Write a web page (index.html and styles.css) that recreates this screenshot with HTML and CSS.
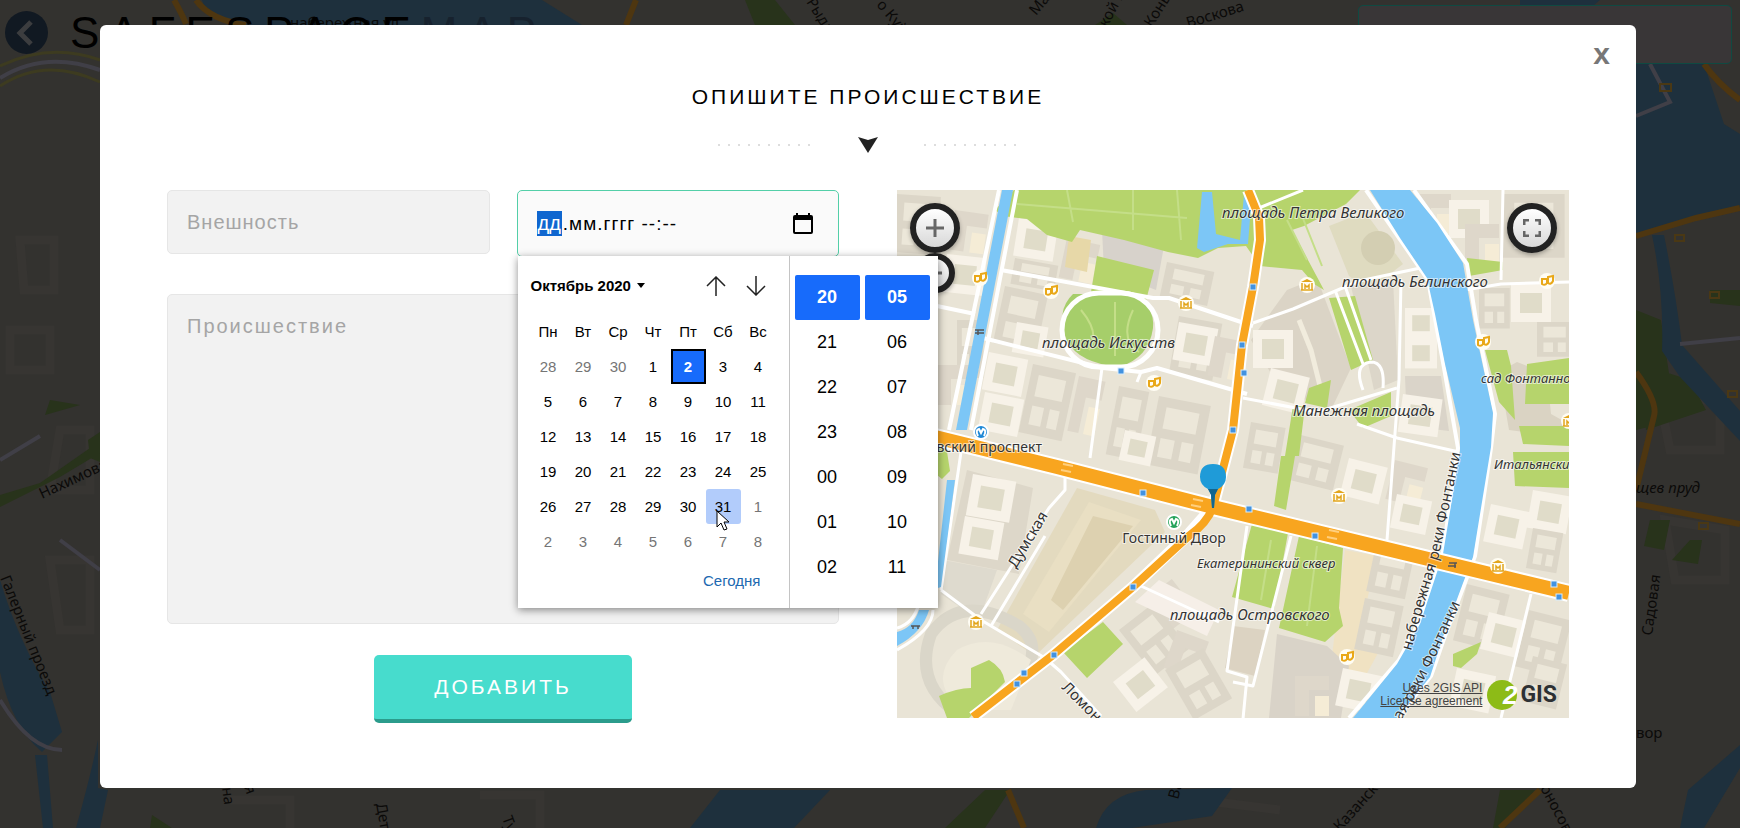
FILE: index.html
```html
<!DOCTYPE html>
<html lang="ru">
<head>
<meta charset="utf-8">
<title>SafeSpaceMap</title>
<link rel="stylesheet" href="styles.css">
</head>
<body>
<div class="stage">
  <svg class="city" viewBox="0 0 1740 828" preserveAspectRatio="none" aria-hidden="true">
    <rect width="1740" height="828" fill="#33322f"/>
    <g fill="none" stroke="#373532" stroke-width="9">
      <path d="M20 240h34v50h-30zM10 330h40v40h-40zM60 430h30v60h-40zM50 560h40v70h-30zM230 800h60v40M480 795h60v60M1200 800l80 10M1660 400h60v50h-50zM1665 520l60 10v50h-50z"/>
    </g>
    <g fill="#28331b">
      <path d="M0 495l40-12 60-42v12l-40 24-60 30zM88 440l12-8v30l-10-4zM50 400l30 5-35 10zM745 0l30 0 20 25h-40zM1095 25l18-12 14 12zM1636 310l25 10 15 100-40 10zM1640 364l50 16 16 30-60 20zM152 815l20 13h-22zM1010 790l-25 38-40 0 40-38zM1650 520l20 0-6 30-20-4zM1690 540l12 0-4 24-26-4zM1710 290l30 0v16l-30-3z"/>
      <path d="M1638 100l25-12 8 20-34 12z"/>
      <path d="M1500 790h35l-30 38h-12z"/>
    </g>
    <g fill="#1e303d">
      <path d="M202 0h340l40 25H232q-25-8-30-25z"/>
      <path d="M1520 0h80l-30 25h-50zM1636 64h68l20 60 16 10v75q-60 10-104 26z"/>
      <path d="M1652 235l12 0q12 60 18 110l58 66v30l-60-64-18-26q2-60-10-116z"/>
      <path d="M0 580q18 60 50 112l12 40-20 20q-30-25-42-80zM35 755h12l6 73h-10zM98 740v48l10 2-8 38h-24q14-50 22-88z"/>
      <path d="M720 790h110l-36 38h-104zM1096 828q10-34 50-38l86-2-20 28-80 12zM1740 745l-52 45-8 38h24l36-60z"/>
    </g>
    <g fill="none" stroke="#4e3610" stroke-width="6">
      <path d="M174 0q8 14 12 24M196 0q14 20 50 25M636 0l-10 25M1704 64q14 20 36 36M1636 236l60-18 44-10M1636 372q22 30 18 44l-18 74M1636 504l104 20M1008 790l16 38M1540 790l-40 38"/>
    </g>
    <g fill="none" stroke="#403f47" stroke-width="4">
      <path d="M0 78q45-28 100-8M1650 64l20 38-34 14M1680 344l60-6M0 460l40-24M60 540l40 30M0 700q30 50 62 50"/>
    </g>
    <path d="M0 66q50-24 100-6M0 86q45-30 100-4" fill="none" stroke="#3d3b20" stroke-width="3"/>
    <g class="city-label">
      <text transform="translate(42 499) rotate(-25)">Нахимова</text>
      <text transform="translate(0 578) rotate(68)">Галерный проезд</text>
      <text transform="translate(806 2) rotate(58)">Рыданского</text>
      <text transform="translate(876 5) rotate(50)">о Куйбышева</text>
      <text transform="translate(1036 16) rotate(-50)">Малая</text>
      <text transform="translate(1107 28) rotate(-62)">кой просп</text>
      <text transform="translate(1152 28) rotate(-58)">Коньшин</text>
      <text transform="translate(1188 28) rotate(-17)">Воскова</text>
      <text transform="translate(290 28)">набережная ул.</text>
      <text x="1636" y="493" font-style="italic">щев пруд</text>
      <text x="1636" y="738">вор</text>
      <text transform="translate(1652 636) rotate(-82)">Садовая</text>
      <text transform="translate(222 788) rotate(82)">на</text>
      <text transform="translate(244 787) rotate(70)">я</text>
      <text transform="translate(376 804) rotate(80)">Детская</text>
      <text transform="translate(502 818) rotate(70)">Тул</text>
      <text transform="translate(1178 800) rotate(-75)">Вал</text>
      <text transform="translate(1340 832) rotate(-48)">Казанская</text>
      <text transform="translate(1540 788) rotate(62)">оносова</text>
    </g>
    <g fill="none" stroke="#4a3814" stroke-width="2">
      <rect x="1660" y="84" width="11" height="7"/><rect x="1675" y="235" width="9" height="6"/><rect x="1710" y="292" width="9" height="6"/><rect x="1728" y="391" width="9" height="6"/><rect x="1699" y="523" width="9" height="6"/>
    </g>
  </svg>

  <header class="topbar">
    <button class="back" type="button" aria-label="Назад">
      <svg width="43" height="43" viewBox="0 0 43 43"><circle cx="21.500" cy="21.500" r="21.500" fill="#111922"/><path d="M26 11L15 22l11 11" fill="none" stroke="#3c3d3f" stroke-width="5"/></svg>
    </button>
    <div class="brand">SAFESPACE<span>MAP</span></div>
    <input class="search" type="text" aria-label="Поиск">
  </header>

  <main class="modal" role="dialog" aria-labelledby="title">
    <button class="close" type="button" aria-label="Закрыть">x</button>
    <h1 id="title">ОПИШИТЕ ПРОИСШЕСТВИЕ</h1>
    <div class="divider">
      <i></i>
      <svg width="20" height="16" viewBox="0 0 20 16"><path d="M0 0l10 3 10-3-10 16z" fill="#222"/></svg>
      <i></i>
    </div>

    <div class="columns">
      <form class="report">
        <div class="pair">
          <input class="field" type="text" placeholder="Внешность" aria-label="Внешность">
          <div class="date">
            <div class="date-box">
              <span class="picked">дд</span>
              <input class="date-input" type="text" value=".мм.гггг --:--" aria-label="Дата и время">
              <button class="icon-button" type="button" aria-label="Открыть календарь">
                <svg width="20" height="21" viewBox="0 0 20 21"><path d="M3 0h2v2h10V0h2v2h1q2 0 2 2v15q0 2-2 2H2q-2 0-2-2V4q0-2 2-2h1zM2 7v12h16V7z" fill="#000" fill-rule="evenodd"/></svg>
              </button>
            </div>
            <div class="picker">
              <section class="calendar">
                <div class="month-row">
                  <button class="month" type="button">Октябрь 2020 <svg width="8" height="5" viewBox="0 0 8 5"><path d="M0 0h8L4 5z"/></svg></button>
                  <button class="step" type="button" aria-label="Предыдущий месяц"><svg width="20" height="20" viewBox="0 0 20 20"><path d="M10 20V1M1 10l9-9 9 9"/></svg></button>
                  <button class="step" type="button" aria-label="Следующий месяц"><svg width="20" height="20" viewBox="0 0 20 20"><path d="M10 0v19M1 10l9 9 9-9"/></svg></button>
                </div>
                <table class="days">
                  <thead><tr><th>Пн</th><th>Вт</th><th>Ср</th><th>Чт</th><th>Пт</th><th>Сб</th><th>Вс</th></tr></thead>
                  <tbody>
                    <tr><td class="out">28</td><td class="out">29</td><td class="out">30</td><td>1</td><td class="today">2</td><td>3</td><td>4</td></tr>
                    <tr><td>5</td><td>6</td><td>7</td><td>8</td><td>9</td><td>10</td><td>11</td></tr>
                    <tr><td>12</td><td>13</td><td>14</td><td>15</td><td>16</td><td>17</td><td>18</td></tr>
                    <tr><td>19</td><td>20</td><td>21</td><td>22</td><td>23</td><td>24</td><td>25</td></tr>
                    <tr><td>26</td><td>27</td><td>28</td><td>29</td><td>30</td><td class="hover">31<svg class="cursor" width="14" height="21" viewBox="0 0 14 21"><path d="M1 1v16l4-4 3 7 3-1-3-7h5z" fill="#fff" stroke="#000"/></svg></td><td class="out">1</td></tr>
                    <tr><td class="out">2</td><td class="out">3</td><td class="out">4</td><td class="out">5</td><td class="out">6</td><td class="out">7</td><td class="out">8</td></tr>
                  </tbody>
                </table>
                <button class="now" type="button">Сегодня</button>
              </section>
              <section class="clock">
                <ul><li class="on">20</li><li>21</li><li>22</li><li>23</li><li>00</li><li>01</li><li>02</li></ul>
                <ul><li class="on">05</li><li>06</li><li>07</li><li>08</li><li>09</li><li>10</li><li>11</li></ul>
              </section>
            </div>
          </div>
        </div>
        <textarea class="field story" placeholder="Происшествие" aria-label="Происшествие"></textarea>
        <button class="submit" type="button">ДОБАВИТЬ</button>
      </form>

      <div class="map">
        <svg class="map-canvas" viewBox="0 0 672 528">
          <defs>
            <path id="q1" d="M514 461C524 425 536 385 542 366L566 252"/>
            <path id="q2" d="M504 531C528 490 543 460 567 405"/>
            <g id="theatre"><circle r="8" fill="#fffdf4"/><path d="M-5-2h5v4q-2 3-5 1zM1-4l5-1v5q-2 4-5 2z" fill="none" stroke="#e9a818" stroke-width="2"/></g>
            <g id="museum"><circle r="8" fill="#fffdf4"/><path d="M-6-3l6-3 6 3z" fill="#e2a51c"/><path d="M-5-2v7h10v-7M-6 5h12M-2 4v-4l2 2 2-2v4" fill="none" stroke="#e2a51c" stroke-width="1.500"/></g>
            <rect id="stop" x="-3" y="-3" width="6" height="6" fill="#4292e0" stroke="#d8ecfb"/>
            <g id="block"><path d="M0 0h44v58H0z" fill="#dcd6c8"/><path d="M8 8h28v18H8zM8 34h12v16H8zM26 34h10v16H26z" fill="#ece7d9"/></g>
            <g id="yard"><path d="M0 0h40v38H0z" fill="#f7f2e8"/><path d="M9 9h22v20H9z" fill="#e0dcc9"/></g>
            <g id="house"><path d="M0 0h34v14H14v26H0z" fill="#ded7ca"/><path d="M20 20h14v20H20z" fill="#f5ecd6"/></g>
          </defs>
          <rect width="672" height="528" fill="#e9e4d6"/>
          <g>
            <use href="#block" transform="translate(0 4) rotate(4)"/><use href="#house" transform="translate(58 20) rotate(8)"/><use href="#yard" transform="translate(50 64) rotate(6)"/>
            <use href="#yard" transform="translate(122 28) rotate(9)"/><use href="#block" transform="translate(118 68) rotate(10) scale(1 .45)"/><use href="#house" transform="translate(170 48) rotate(12)"/>
            <path d="M205 40l62 16-8 44-52-20z" fill="#d7d2cb"/><path d="M172 46l22 4-4 32-22-5z" fill="#e7d8a8"/>
            <use href="#block" transform="translate(108 96) rotate(12)"/><use href="#yard" transform="translate(120 132) rotate(10) scale(.8)"/>
            <use href="#block" transform="translate(270 72) rotate(12) scale(1.100 .6)"/>
            <use href="#block" transform="translate(282 126) rotate(10)"/><use href="#yard" transform="translate(282 132) rotate(10)"/><use href="#house" transform="translate(318 146) rotate(11)"/>
            <use href="#yard" transform="translate(92 162) rotate(11)"/><use href="#yard" transform="translate(88 202) rotate(11)"/><use href="#block" transform="translate(136 174) rotate(12) scale(1 1.200)"/><use href="#house" transform="translate(182 186) rotate(12) scale(.8 1.400)"/><use href="#block" transform="translate(222 196) rotate(11) scale(.7 1.200)"/><use href="#block" transform="translate(262 206) rotate(11) scale(1.200)"/><use href="#yard" transform="translate(228 240) rotate(12) scale(.8)"/>
            <use href="#block" transform="translate(60 130) scale(.6 1)"/><use href="#house" transform="translate(40 175)"/>
            <path d="M432 36l36-14 38 52-34 26-20-14z" fill="#dfdbc0"/><circle cx="481" cy="58" r="17" fill="#d3ceb2"/>
            <path d="M390 100l30-12 34 90-20 42-50-20-30-50z" fill="#dbd4c6"/><path d="M454 96l42-6 5 100-24 10z" fill="#dcd6c9"/><path d="M402 130l12 30 10 40" fill="none" stroke="#f1ecdd" stroke-width="5"/>
            <use href="#yard" transform="translate(356 140)"/><use href="#yard" transform="translate(374 178) rotate(14)"/><use href="#block" transform="translate(354 232) rotate(10) scale(.8)"/>
            <use href="#yard" transform="translate(508 118) scale(.8)"/><use href="#yard" transform="translate(508 148) scale(.8)"/><path d="M508 186h36l8 55-42-5z" fill="#dad4c9"/><use href="#yard" transform="translate(506 204) rotate(8)"/>
            <use href="#house" transform="translate(520 4)"/><use href="#yard" transform="translate(552 10)"/><use href="#house" transform="translate(568 34)"/><use href="#block" transform="translate(606 4) scale(1.400 1.100)"/>
            <use href="#block" transform="translate(582 98) scale(.7)"/><use href="#yard" transform="translate(614 94)"/><use href="#block" transform="translate(640 132) scale(.8 .6)"/><path d="M602 182l18-10 30 12 4 40 18 10v14l-60-8z" fill="#dad3c3"/>
            <use href="#block" transform="translate(400 244) rotate(14) scale(1.100 .8)"/><use href="#yard" transform="translate(452 268) rotate(14)"/><use href="#house" transform="translate(498 270) rotate(14)"/><use href="#yard" transform="translate(500 304) rotate(12) scale(.9)"/>
            <use href="#yard" transform="translate(594 314) rotate(12)"/><use href="#yard" transform="translate(636 300) rotate(10)"/><use href="#block" transform="translate(636 338) rotate(10) scale(.7)"/>
            <path d="M70 280l66 18-14 86-72-14z" fill="#ddd7c9"/><use href="#yard" transform="translate(76 284) rotate(10) scale(1.100)"/><use href="#yard" transform="translate(68 326) rotate(10)"/>
            <path d="M180 298l78 22 10 22-130 124-38-26z" fill="#e3dabf"/><path d="M192 312l52 18-92 112-26-18z" fill="#e9dfc3"/><path d="M196 326l40 10-70 84-12-10z" fill="#ddd1b0"/>
            <path d="M46 370l54 10-18 50-38-26z" fill="#dedace"/>
            <path d="M62 524q-46-30-28-80 30-42 88-8 20 16 10 40" fill="none" stroke="#dad6c9" stroke-width="12"/>
            <path d="M60 460q-30 30 4 60h50l20-50q-40-30-74-10z" fill="#efeadb"/>
            <use href="#house" transform="translate(248 410) rotate(-38)"/><use href="#block" transform="translate(222 440) rotate(-38)"/><use href="#house" transform="translate(280 440) rotate(20)"/><use href="#yard" transform="translate(216 492) rotate(-38)"/><use href="#block" transform="translate(268 480) rotate(-30)"/><path d="M262 390l60 30-12 26-72-34z" fill="#f6efe8"/>
            <path d="M448 360l32 6-18 80 24 8-22 40-30-20z" fill="#f0e2c2"/><use href="#block" transform="translate(480 350) rotate(12) scale(.9)"/><use href="#block" transform="translate(468 408) rotate(12) scale(.9)"/>
            <path d="M336 436l32 4-10 46-30-8z" fill="#dcd3c2"/><path d="M380 444l50 12 22 20-8 52h-72z" fill="#d9d3c8"/><use href="#yard" transform="translate(446 478) rotate(12)"/><use href="#house" transform="translate(398 486)"/>
            <use href="#block" transform="translate(570 394) rotate(14)"/><use href="#yard" transform="translate(592 422) rotate(14)"/><use href="#block" transform="translate(632 420) rotate(14)"/><use href="#yard" transform="translate(560 478) rotate(12)"/><use href="#block" transform="translate(636 466) rotate(14) scale(.8)"/>
          </g>
          <g fill="#b6d46c">
            <path d="M117 0h256l90 0-14 14-42 22-12 4 32 60-10-6-12-14-42-4-14-20-28 2-20 10-30-6-44-12-44-10-8 12-25-7-20-16-24-3-8-6z"/>
            <path d="M200 66l57 14-10 38-53-16z"/><path d="M432 108l26-2 18 64-22 10zM412 198l22-8-4 28-22-5zM452 220l42-18v24l-28 12zM570 68l36 4v8l-34 6zM588 160l22 0 4 16 4 54-16-18zM630 174l42-6v46l-44 0zM622 236h50v20l-46-2zM616 262h56v36l-54-2zM384 266h14l-9 54-12-4zM396 216h12l-6 50h-14z"/>
            <path d="M355 334l36 9-14 76-42-12zM402 346l44 12-4 60 4 18-18 16-46-14zM556 464l28-12-4 12-16 14-8-2zM166 462l40-30 20 22-36 34z"/>
            <path d="M41 255h8l4 26-8 8-5-4zM42 506q18-8 32-8v-20l18-8q14 8 16 22l-36 36H50z"/>
          </g>
          <path d="M176 104h60q22 12 20 34-4 30-34 39-40-4-52-26-12-30 6-47z" fill="#a6ce6a"/>
          <g fill="none" stroke="#c4de88" stroke-width="2"><path d="M218 112v54M184 120q20 24 8 40M236 120q-14 30 6 42M170 0l6 32M236 0v40M280 0l4 50M120 14l170 14M390 30l20 40M405 26l20 50M374 350l-10 60M420 356l-10 80"/></g>
          <g fill="none" stroke="#fff" stroke-width="5" stroke-linejoin="round">
            <path d="M102 0L52 240M120 0L74 240" stroke-width="4"/>
            <path d="M104 80l152 28h16l84 28M86 148l120 30 38 4 16-4 90 26M40 116l38 8" stroke-width="4"/>
            <rect x="165" y="103" width="96" height="74" rx="37"/>
            <path d="M205 178l-12 90M244 182l-4 10M362 18l44-18M356 133l40-14 66-28 66-14M438 100l28 74M448 96l26 74M466 200q-10-26 8-28 14 0 12 26M346 208l74 14 80-24M460 234l40 14 62 14" stroke-width="3"/>
            <path d="M504 90l-2 100-12 160M534 100h34l36-6 68-2M606 0l-2 90" stroke-width="3"/>
            <path d="M469 0l62 90 16 88 14 80-15 104-24 70-20 38-50 58M517 0l53 74 9 56 19 94-4 34-16 108-30 80-14 40-34 42" stroke-width="4"/>
            <path d="M64 262L44 400M168 286v14l-16 18-68 106M148 346l-54 90M44 400l40 30 64 38 16 14 40 44M394 346l-38 150-20-4M350 336l-20 145 20 6-4 42M634 404l-30 124M244 396l78 36" stroke-width="3"/>
            <path d="M22 414q-6 20-22 24M36 420q0 20-36 40" stroke-width="3"/>
          </g>
          <g fill="#7cc6f6">
            <path d="M105 0h11L70 240H59zM50 290h8L44 397l-6 2zM22 420h10q-6 22-32 36v-14q16-4 22-22z"/>
            <path d="M305 2l10 0 4 42 24 6 4-46h8l-4 50-20 0-24 8-7-4z"/>
            <path d="M473 0h40l27 33 26 40 10 57 20 93-2 34-18 110-10 26-20 54-13 40-33 41h-44l44-54 23-40 23-70 17-103v-23l-15-64-10-50-8-36-27-40z"/>
          </g>
          <g fill="none" stroke-linejoin="round">
            <path d="M351 0l11 27 1 23-7 47-11 58-9 85-20 77-23 26-57 54-80 68-80 62" stroke="#fff" stroke-width="12"/>
            <path d="M30 245l130 32 156 40 356 86" stroke="#fff" stroke-width="18"/>
            <path d="M351 0l11 27 1 23-7 47-11 58-9 85-20 77q-6 16-23 28l-57 52-80 68-80 62" stroke="#f8a51f" stroke-width="8"/>
            <path d="M30 245l130 32 156 40 356 86" stroke="#f8a51f" stroke-width="14"/>
            <path d="M166 274l10 2M164 280l10 2M296 309l10 2M294 315l10 2M432 340l10 2M430 347l10 2" stroke="#ffcf7e" stroke-width="2"/>
          </g>
          <use href="#theatre" x="83" y="88"/><use href="#theatre" x="154" y="101"/><use href="#theatre" x="257" y="193"/><use href="#theatre" x="650" y="91"/><use href="#theatre" x="586" y="152"/><use href="#theatre" x="450" y="467"/>
          <use href="#museum" x="289" y="113"/><use href="#museum" x="410" y="95"/><use href="#museum" x="79" y="432"/><use href="#museum" x="442" y="306"/><use href="#museum" x="601" y="376"/><use href="#museum" x="672" y="231"/>
          <use href="#stop" x="224" y="181"/><use href="#stop" x="356" y="97"/><use href="#stop" x="345" y="155"/><use href="#stop" x="347" y="183"/><use href="#stop" x="336" y="240"/><use href="#stop" x="246" y="303"/><use href="#stop" x="236" y="397"/><use href="#stop" x="157" y="465"/><use href="#stop" x="127" y="483"/><use href="#stop" x="120" y="494"/><use href="#stop" x="352" y="319"/><use href="#stop" x="418" y="346"/><use href="#stop" x="657" y="394"/><use href="#stop" x="662" y="407"/>
          <g fill="none" stroke="#555" stroke-width="1.500"><path d="M78 140h9M78 143h9M81 140v5M14 436h9M16 436v3M21 436v3M552 373h8M551 376h8M558 373v5"/></g>
          <g fill="none" stroke="#fff" stroke-width="2">
            <circle cx="84" cy="242" r="7" fill="#1e88d6"/><path d="M81 246q-3-6 1-7l2 4 2-4q4 1 1 7"/>
            <circle cx="277" cy="332" r="7" fill="#24a35a"/><path d="M274 336q-3-6 1-7l2 4 2-4q4 1 1 7"/>
          </g>
          <g class="label">
            <text class="area" x="325" y="28">площадь Петра Великого</text>
            <text class="area" x="445" y="97">площадь Белинского</text>
            <text class="area" x="145" y="158">площадь Искусств</text>
            <text class="area" x="396" y="226">Манежная площадь</text>
            <text class="area" x="273" y="430">площадь Островского</text>
            <text class="garden" x="584" y="193">сад Фонтанного дома</text>
            <text class="garden" x="597" y="279">Итальянский сад</text>
            <text class="garden" x="300" y="378">Екатерининский сквер</text>
            <text x="145" y="262" text-anchor="end">Невский проспект</text>
            <text x="277" y="353" text-anchor="middle">Гостиный Двор</text>
            <text class="street" transform="translate(119 379) rotate(-59)">Думская</text>
            <text class="street" transform="translate(164 498) rotate(45)">Ломоносова</text>
            <text class="street"><textPath href="#q1">набережная реки Фонтанки</textPath></text>
            <text class="street"><textPath href="#q2">ая реки Фонтанки</textPath></text>
          </g>
          <path d="M316 274q13 0 13 13 0 8-8 12l-3 5-1 14h-2l-1-14-3-5q-8-4-8-12 0-13 13-13z" fill="#1f9bd8"/>
          <path d="M311 299h10l-3 6-1 13h-2l-1-13z" fill="#12668f"/>
        </svg>
        <div class="zoom">
          <button class="knob" type="button" aria-label="Приблизить"><svg width="18" height="18" viewBox="0 0 18 18"><path d="M9 0v18M0 9h18"/></svg></button>
          <button class="knob small" type="button" aria-label="Отдалить"><svg width="14" height="14" viewBox="0 0 14 14"><path d="M0 7h14"/></svg></button>
        </div>
        <button class="knob full" type="button" aria-label="Во весь экран"><svg width="18" height="18" viewBox="0 0 18 18"><path d="M1 6V1h5M12 1h5v5M17 12v5h-5M6 17H1v-5"/></svg></button>
        <div class="credits">
          <p><a href="#api">Uses 2GIS API</a><a href="#license">License agreement</a></p>
          <span class="logo"><b>2</b>GIS</span>
        </div>
      </div>
    </div>
  </main>
</div>
</body>
</html>
```
FILE: styles.css
```css
* { box-sizing: border-box; }
body { margin: 0; font-family: "Liberation Sans", Arial, sans-serif; color: #000; }
button, input, textarea { font: inherit; }
button { padding: 0; border: 0; background: none; color: inherit; }
p, ul, h1 { margin: 0; padding: 0; }

.stage { position: relative; min-height: 100vh; overflow: hidden; padding: 25px 104px 40px 100px; background: #33322f; }
.city { position: absolute; inset: 0; width: 100%; height: 100%; }
.city-label { font: 15px "Noto Sans", sans-serif; fill: #0b0a09; }

.topbar { position: absolute; top: 5px; left: 5px; right: 8px; display: flex; align-items: flex-start; }
.back { margin-top: 6px; height: 43px; }
.brand { flex: 1; margin-left: 22px; font-size: 44px; line-height: 56px; letter-spacing: 10px; color: #000; }
.brand span { color: #17222e; }
.search { width: 374px; height: 59px; border: 1px solid #0f4a42; border-radius: 5px; background: #393637; }

.modal { position: relative; padding: 60px 67px 65px; border-radius: 6px; background: #fff; }
.close { position: absolute; top: 12px; right: 26px; font-size: 30px; line-height: 34px; font-weight: 700; color: #777; }
h1 { font-size: 21px; line-height: 24px; font-weight: 400; letter-spacing: 3px; text-align: center; }
.divider { display: flex; justify-content: center; align-items: center; gap: 46px; margin-top: 27px; height: 18px; }
.divider i { width: 94px; height: 2px; background: repeating-linear-gradient(90deg, #ddd 0 2px, transparent 2px 10px); }

.columns { display: grid; grid-template-columns: 1fr 1fr; gap: 58px; margin-top: 36px; align-items: start; }
.report { display: flex; flex-direction: column; min-width: 0; }
.pair { display: grid; grid-template-columns: minmax(0, 1fr) minmax(0, 1fr); gap: 27px; align-items: start; }
.field { width: 100%; height: 64px; padding: 0 19px; border: 1px solid #e6e6e6; border-radius: 5px; background: #f2f2f2; font-size: 20px; letter-spacing: 1px; }
.field::placeholder { color: #a5a5a5; opacity: 1; }
.story { height: 330px; margin-top: 37px; padding: 20px 19px; resize: none; display: block; letter-spacing: 2px; }
.submit { align-self: center; width: 258px; height: 68px; margin-top: 31px; border-bottom: 4px solid #2b9c8c; border-radius: 5px; background: #47dccd; color: #fff; font-size: 21px; letter-spacing: 3px; }

.date { position: relative; }
.date-box { display: flex; align-items: center; height: 67px; padding: 0 25px 0 19px; border: 1px solid #53cfa8; border-radius: 5px; background: #fafafa; }
.picked { padding: 0 1px; background: #0f66cf; color: #fff; font-size: 20px; line-height: 25px; }
.date-input { flex: 1; min-width: 0; padding: 0 0 0 1px; border: 0; background: none; font-size: 19px; letter-spacing: 1px; outline: 0; }
.icon-button { height: 21px; }

.picker { position: absolute; z-index: 2; top: 66px; left: 1px; display: flex; width: 420px; height: 352px; background: #fff; box-shadow: 0 2px 8px rgba(0, 0, 0, .45); }
.calendar { width: 272px; padding: 12px 13px; border-right: 1px solid #c4c4c4; }
.month-row { display: flex; align-items: center; height: 35px; }
.month { flex: 1; text-align: left; font-size: 15px; font-weight: 700; }
.month svg { margin: 0 0 3px 2px; }
.step { width: 40px; height: 20px; }
.step path { fill: none; stroke: #222; stroke-width: 1.500; }
.days { width: 245px; margin-top: 11px; border-collapse: collapse; table-layout: fixed; font-size: 15px; }
.days th, .days td { position: relative; height: 35px; padding: 0; text-align: center; font-weight: 400; }
.days .out { color: #757575; }
.days .today { background: #176bfb; box-shadow: inset 0 0 0 2px #000; color: #fff; font-weight: 700; }
.days .hover { border-radius: 3px; background: #b2ccfb; }
.cursor { position: absolute; left: 10px; top: 21px; z-index: 1; }
.now { display: block; margin: 12px 15px 0 auto; font-size: 15px; line-height: 20px; color: #2068b0; }
.clock { display: flex; gap: 5px; padding: 19px 5px; }
.clock ul { width: 65px; list-style: none; font-size: 18px; line-height: 45px; text-align: center; }
.clock .on { border-radius: 2px; background: #176bfb; color: #fff; font-weight: 700; }

.map { position: relative; overflow: hidden; }
.map-canvas { display: block; width: 100%; height: auto; }
.label { font: 14px "Noto Sans", sans-serif; fill: #333; stroke: #fff; stroke-width: 2px; stroke-opacity: .6; paint-order: stroke; }
.area { font-size: 15px; font-style: italic; }
.garden { font-size: 13px; font-style: italic; }
.street { font-size: 15px; }
.zoom { position: absolute; top: 13px; left: 13px; display: flex; flex-direction: column; align-items: center; }
.knob { display: grid; place-items: center; width: 50px; height: 50px; border: 6px solid #222; border-radius: 50%; background: linear-gradient(#fff, #d8d8d8); box-shadow: 0 2px 4px rgba(0, 0, 0, .3); }
.knob path { fill: none; stroke: #666; stroke-width: 3; }
.knob.small { width: 40px; height: 40px; }
.full { position: absolute; top: 13px; right: 12px; }
.credits { position: absolute; right: 12px; bottom: 7px; display: flex; align-items: center; gap: 5px; }
.credits p { font-size: 12px; line-height: 13px; text-align: right; }
.credits a { display: block; color: #444; }
.logo { display: flex; align-items: center; gap: 3px; font: 700 23px/32px Roboto, sans-serif; color: #2d3033; }
.logo b { width: 30px; height: 30px; border-radius: 50%; background: #8dbb17; color: #fff; font: italic 700 26px/30px "Liberation Sans", sans-serif; text-align: right; }
```
